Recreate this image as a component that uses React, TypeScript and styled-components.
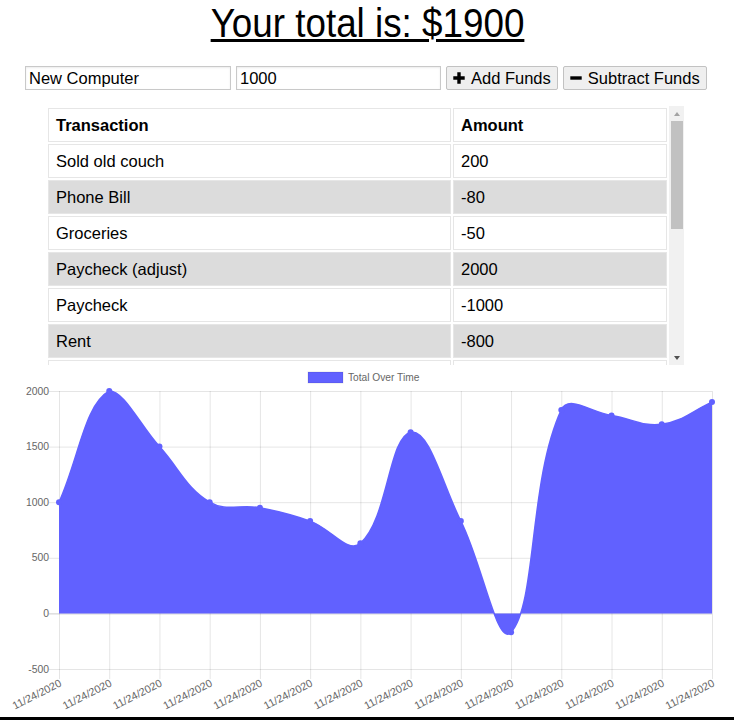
import React from "react";
import styled, { createGlobalStyle } from "styled-components";

const GlobalStyle = createGlobalStyle`
  html, body { margin: 0; padding: 0; background: #fff; }
  body { font-family: "Liberation Sans", Arial, Helvetica, sans-serif; color: #000; }
`;

const Page = styled.div`
  width: 734px;
  height: 720px;
  display: flex;
  flex-direction: column;
  overflow: hidden;
`;

const Title = styled.h1`
  margin: 0;
  height: 46px;
  display: flex;
  justify-content: center;
  font-size: 40px;
  font-weight: 400;
  line-height: 46px;
`;

const TitleText = styled.span`
  display: inline-block;
  white-space: nowrap;
  text-decoration: underline;
  text-decoration-thickness: 3px;
  transform: scaleX(0.92);
  transform-origin: center;
`;

const Form = styled.form`
  display: flex;
  gap: 5px;
  margin-top: 20px;
  padding-left: 25px;
  height: 24px;
`;

const TextInput = styled.input<{ $w: number }>`
  width: ${(p) => p.$w}px;
  height: 24px;
  box-sizing: border-box;
  border: 1px solid #c9c9c9;
  box-shadow: inset 0 1px 2px rgba(0, 0, 0, 0.08);
  padding: 1px 3px;
  font: 16.5px "Liberation Sans", Arial, sans-serif;
  color: #000;
  background: #fff;
  outline: none;
`;

const Button = styled.button`
  height: 24px;
  box-sizing: border-box;
  padding: 0 6px;
  display: inline-flex;
  align-items: center;
  gap: 6px;
  background: #efefef;
  border: 1px solid #c2c2c2;
  border-radius: 2px;
  font: 16.5px "Liberation Sans", Arial, sans-serif;
  color: #000;
  white-space: nowrap;
`;

const Icon = styled.svg`
  width: 12px;
  height: 12px;
  flex: none;
  margin-top: -1px;
`;

const PlusIcon = () => (
  <Icon viewBox="0 0 12 12">
    <path d="M4.3 0.3h3.4v4h4v3.4h-4v4h-3.4v-4h-4v-3.4h4z" fill="#000" />
  </Icon>
);

const MinusIcon = () => (
  <Icon viewBox="0 0 12 12">
    <rect x="0.3" y="4.3" width="11.4" height="3.4" fill="#000" />
  </Icon>
);

const TableFrame = styled.div`
  display: flex;
  margin: 16px 0 0 46px;
  width: 638px;
  height: 259px;
  flex: none;
`;

const TableViewport = styled.div`
  flex: 1;
  overflow: hidden;
`;

const ScrollTrack = styled.div`
  width: 15px;
  flex: none;
  background: #f1f1f1;
  display: flex;
  flex-direction: column;
  align-items: center;
`;

const ScrollArrow = styled.div<{ $dir: "up" | "down" }>`
  height: 15px;
  width: 15px;
  flex: none;
  display: flex;
  align-items: center;
  justify-content: center;
  &::before {
    content: "";
    width: 0;
    height: 0;
    border-left: 3.5px solid transparent;
    border-right: 3.5px solid transparent;
    ${(p) =>
      p.$dir === "up"
        ? "border-bottom: 4px solid #a3a3a3;"
        : "border-top: 4px solid #505050;"}
  }
`;

const ScrollThumb = styled.div`
  width: 12px;
  height: 108px;
  flex: none;
  background: #c1c1c1;
`;

const ScrollSpacer = styled.div`
  flex: 1;
`;

const Table = styled.table`
  width: 100%;
  border-collapse: separate;
  border-spacing: 2px;
  font-size: 16.5px;
`;

const HeadCell = styled.th<{ $w?: number }>`
  ${(p) => (p.$w ? `width: ${p.$w}px;` : "")}
  text-align: left;
  font-weight: 700;
  line-height: 32px;
  padding: 0 7px;
  border: 1px solid #e6e6e6;
  background: #fff;
`;

const Row = styled.tr<{ $shade: boolean }>`
  background: ${(p) => (p.$shade ? "#dcdcdc" : "#fff")};
`;

const Cell = styled.td`
  line-height: 32px;
  padding: 0 7px;
  border: 1px solid #e6e6e6;
  white-space: nowrap;
`;

const ChartSvg = styled.svg`
  display: block;
  flex: none;
  font-family: "Liberation Sans", Arial, sans-serif;
`;

const BottomBar = styled.div`
  height: 3px;
  background: #000;
  flex: none;
`;

const transactions: [string, number][] = [
  ["Sold old couch", 200],
  ["Phone Bill", -80],
  ["Groceries", -50],
  ["Paycheck (adjust)", 2000],
  ["Paycheck", -1000],
  ["Rent", -800],
  ["Bonus", 1000],
  ["Car Repair", -200],
  ["Electric Bill", -120],
  ["Dinner", -50],
  ["Insurance", -500],
  ["Tuition", -500],
  ["Paycheck", 1000],
  ["Savings", 1000],
];

const series = [1000, 2000, 1500, 1000, 950, 830, 630, 1630, 830, -170, 1830, 1780, 1700, 1900];

const FILL = "#6161ff";
const Y0 = 365;
const L = 59;
const R = 712;
const T = 391 - Y0;
const B = 669 - Y0;
const H = 352;

const yOf = (v: number) => B - ((v + 500) / 2500) * (B - T);

type P = { x: number; y: number };

function buildChart() {
  const n = series.length;
  const pts: P[] = series.map((v, i) => ({ x: L + (i * (R - L)) / (n - 1), y: yOf(v) }));
  const t = 0.4;
  const clamp = (p: P): P => ({
    x: Math.min(Math.max(p.x, L), R),
    y: Math.min(Math.max(p.y, T), B),
  });
  const ctrl = pts.map((p, i) => {
    const prev = pts[i - 1] || p;
    const next = pts[i + 1] || p;
    const d01 = Math.hypot(p.x - prev.x, p.y - prev.y);
    const d12 = Math.hypot(next.x - p.x, next.y - p.y);
    let s01 = d01 / (d01 + d12);
    let s12 = d12 / (d01 + d12);
    if (isNaN(s01)) s01 = 0;
    if (isNaN(s12)) s12 = 0;
    const fa = t * s01;
    const fb = t * s12;
    return {
      c1: clamp({ x: p.x - fa * (next.x - prev.x), y: p.y - fa * (next.y - prev.y) }),
      c2: clamp({ x: p.x + fb * (next.x - prev.x), y: p.y + fb * (next.y - prev.y) }),
    };
  });
  let d = `M ${pts[0].x} ${pts[0].y}`;
  for (let i = 1; i < n; i++) {
    const a = ctrl[i - 1].c2;
    const b = ctrl[i].c1;
    d += ` C ${a.x} ${a.y} ${b.x} ${b.y} ${pts[i].x} ${pts[i].y}`;
  }
  const z = yOf(0);
  const area = `${d} L ${R} ${z} L ${L} ${z} Z`;
  return { pts, line: d, area };
}

const Chart: React.FC = () => {
  const { pts, line, area } = buildChart();
  const ticks = [2000, 1500, 1000, 500, 0, -500];
  return (
    <ChartSvg width={734} height={H} viewBox={`0 0 734 ${H}`}>
      <rect x={308} y={7} width={35} height={11} fill={FILL} stroke="rgba(0,0,0,0.1)" strokeWidth={1} />
      <text x={348} y={16} fontSize={10.2} fill="#666">
        Total Over Time
      </text>
      {ticks.map((v) => (
        <g key={v}>
          <line
            x1={L - 10}
            x2={R}
            y1={yOf(v) + 0.5}
            y2={yOf(v) + 0.5}
            stroke={v === 0 ? "rgba(0,0,0,0.2)" : "rgba(0,0,0,0.1)"}
            strokeWidth={1}
          />
          <text x={49} y={yOf(v) + 3.5} fontSize={10.4} fill="#666" textAnchor="end">
            {v}
          </text>
        </g>
      ))}
      {pts.map((p, i) => (
        <line key={i} x1={p.x + 0.5} x2={p.x + 0.5} y1={T} y2={B + 10} stroke="rgba(0,0,0,0.1)" strokeWidth={1} />
      ))}
      <path d={area} fill={FILL} />
      <path d={line} fill="none" stroke={FILL} strokeWidth={1.5} />
      {pts.map((p, i) => (
        <circle key={i} cx={p.x} cy={p.y} r={3} fill={FILL} />
      ))}
      {pts.map((p, i) => (
        <text
          key={i}
          transform={`translate(${p.x + 2} ${B + 14}) rotate(-27)`}
          fontSize={10.8}
          fill="#666"
          textAnchor="end"
          dominantBaseline="middle"
        >
          11/24/2020
        </text>
      ))}
    </ChartSvg>
  );
};

export default function App() {
  return (
    <Page>
      <GlobalStyle />
      <Title>
        <TitleText>Your total is: $1900</TitleText>
      </Title>
      <Form onSubmit={(e) => e.preventDefault()}>
        <TextInput $w={206} defaultValue="New Computer" />
        <TextInput $w={205} defaultValue="1000" />
        <Button type="button">
          <PlusIcon />
          Add Funds
        </Button>
        <Button type="button">
          <MinusIcon />
          Subtract Funds
        </Button>
      </Form>
      <TableFrame>
        <TableViewport>
          <Table>
            <thead>
              <tr>
                <HeadCell $w={387}>Transaction</HeadCell>
                <HeadCell>Amount</HeadCell>
              </tr>
            </thead>
            <tbody>
              {transactions.map(([name, amt], i) => (
                <Row key={i} $shade={i % 2 === 1}>
                  <Cell>{name}</Cell>
                  <Cell>{amt}</Cell>
                </Row>
              ))}
            </tbody>
          </Table>
        </TableViewport>
        <ScrollTrack>
          <ScrollArrow $dir="up" />
          <ScrollThumb />
          <ScrollSpacer />
          <ScrollArrow $dir="down" />
        </ScrollTrack>
      </TableFrame>
      <Chart />
      <BottomBar />
    </Page>
  );
}
